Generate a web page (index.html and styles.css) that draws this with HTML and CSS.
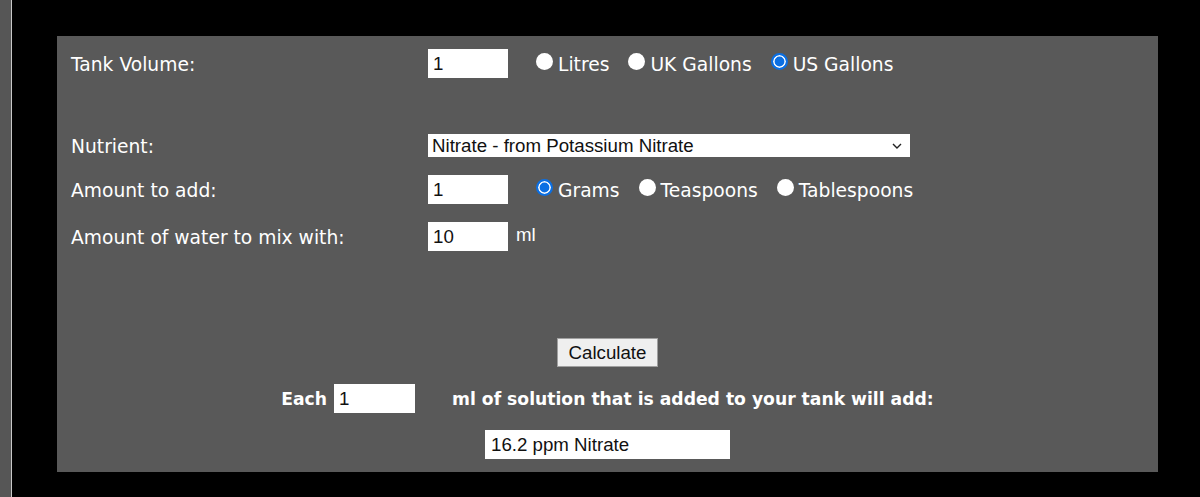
FILE: index.html
```html
<!DOCTYPE html>
<html>
<head>
<meta charset="utf-8">
<link rel="stylesheet" href="styles.css">
</head>
<body>
<div class="page">
  <div class="strip"></div>
  <main class="main">
    <form class="panel">
      <div class="row row-first">
        <div class="label">Tank Volume:</div>
        <div class="field">
          <input class="num" type="text" value="1">
          <span class="opts">
            <label class="opt"><input type="radio" name="vol"><span>Litres</span></label>
            <label class="opt"><input type="radio" name="vol"><span>UK Gallons</span></label>
            <label class="opt"><input type="radio" name="vol" checked><span>US Gallons</span></label>
          </span>
        </div>
      </div>
      <div class="row row-nutrient">
        <div class="label">Nutrient:</div>
        <div class="field">
          <div class="select-wrap">
            <select class="select">
              <option>Nitrate - from Potassium Nitrate</option>
            </select>
            <svg class="chev" width="10" height="6" viewBox="0 0 10 6"><path d="M1 1 L5 5 L9 1" fill="none" stroke="#222" stroke-width="1.4"/></svg>
          </div>
        </div>
      </div>
      <div class="row row-gap">
        <div class="label">Amount to add:</div>
        <div class="field">
          <input class="num" type="text" value="1">
          <span class="opts">
            <label class="opt"><input type="radio" name="amt" checked><span>Grams</span></label>
            <label class="opt"><input type="radio" name="amt"><span>Teaspoons</span></label>
            <label class="opt"><input type="radio" name="amt"><span>Tablespoons</span></label>
          </span>
        </div>
      </div>
      <div class="row row-gap">
        <div class="label">Amount of water to mix with:</div>
        <div class="field">
          <input class="num" type="text" value="10">
          <span class="unit">ml</span>
        </div>
      </div>
      <div class="center calc-row">
        <button type="button" class="btn">Calculate</button>
      </div>
      <div class="center each-row">
        <span class="bold">Each</span>
        <input class="num each-num" type="text" value="1">
        <span class="bold">ml of solution that is added to your tank will add:</span>
      </div>
      <div class="center result-row">
        <input class="result" type="text" value="16.2 ppm Nitrate">
      </div>
    </form>
  </main>
</div>
</body>
</html>
```
FILE: styles.css
```css
html, body {
  margin: 0;
  padding: 0;
  background: #000;
  height: 100%;
}
.page {
  display: flex;
  min-height: 497px;
}
.strip {
  width: 11px;
  background: #565656;
  border-right: 1px solid #c8c8c8;
}
.main {
  padding: 36px 0 0 45px;
}
.panel {
  box-sizing: border-box;
  width: 1101px;
  height: 436px;
  background: #595959;
  padding: 13px 14px 0 14px;
  margin: 0;
  display: flex;
  flex-direction: column;
  font-family: "DejaVu Sans", Verdana, sans-serif;
  font-size: 18.7px;
  color: #fff;
}
.row {
  display: grid;
  grid-template-columns: 357px 1fr;
  align-items: center;
}
.row-nutrient { margin-top: 56px; }
.row-gap { margin-top: 18px; }
.label { padding-top: 1px; }
.field {
  display: flex;
  align-items: center;
}
.num {
  box-sizing: border-box;
  width: 80px;
  height: 29px;
  border: none;
  background: #fff;
  padding: 0 5px;
  font-family: "Liberation Sans", Arial, sans-serif;
  font-size: 18.7px;
  color: #111;
  outline: none;
}
.opts {
  display: flex;
  align-items: center;
  margin-left: 28px;
  gap: 19px;
}
.opt {
  display: flex;
  align-items: center;
  gap: 5px;
}
.opt span { padding-top: 2px; }
.opt input {
  appearance: none;
  -webkit-appearance: none;
  box-sizing: border-box;
  flex: 0 0 17px;
  width: 17px;
  height: 17px;
  min-width: 17px;
  margin: 0;
  border-radius: 50%;
  background: #fff;
  border: none;
  transform: translateY(-2px);
}
.opt input:checked {
  border: 2.5px solid #0b6fe3;
  background: #0b6fe3;
  box-shadow: inset 0 0 0 1.6px #fff;
}
.unit {
  margin-left: 8px;
  font-family: "Liberation Sans", Arial, sans-serif;
  font-size: 18.7px;
  transform: translateY(-2px);
}
.select-wrap {
  position: relative;
  width: 482px;
  height: 23px;
}
.select {
  appearance: none;
  -webkit-appearance: none;
  box-sizing: border-box;
  width: 482px;
  height: 23px;
  border: none;
  border-radius: 0;
  background: #fff;
  padding: 0 4px;
  font-family: "Liberation Sans", Arial, sans-serif;
  font-size: 18.7px;
  color: #111;
}
.chev {
  position: absolute;
  right: 8px;
  top: 9px;
}
.center {
  display: flex;
  justify-content: center;
  align-items: center;
}
.calc-row { margin-top: 87px; }
.btn {
  box-sizing: border-box;
  width: 101px;
  height: 29px;
  background: #efefef;
  border: 1px solid #a0a0a0;
  border-radius: 0;
  font-family: "Liberation Sans", Arial, sans-serif;
  font-size: 18.7px;
  color: #111;
  padding: 0;
}
.each-row { margin-top: 17px; }
.bold {
  font-weight: bold;
  font-size: 17.2px;
}
.each-num {
  width: 81px;
  margin: 0 37px 0 7px;
}
.result-row { margin-top: 17px; }
.result {
  box-sizing: border-box;
  width: 245px;
  height: 29px;
  border: none;
  background: #fff;
  padding: 0 6px;
  font-family: "Liberation Sans", Arial, sans-serif;
  font-size: 18.7px;
  color: #111;
  outline: none;
}
```
